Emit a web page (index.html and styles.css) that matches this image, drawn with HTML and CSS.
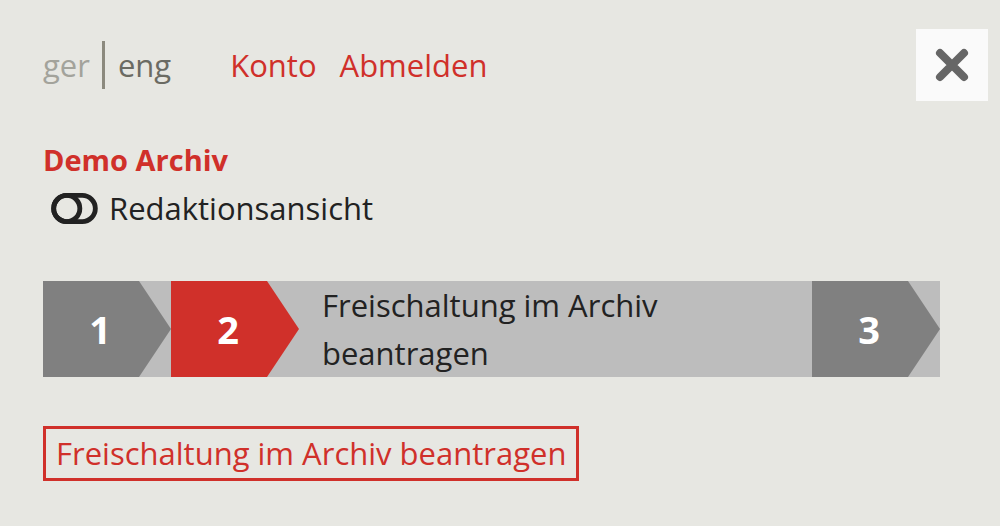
FILE: index.html
```html
<!DOCTYPE html>
<html lang="de">
<head>
  <meta charset="UTF-8" />
  <title>Demo Archiv</title>
  <link rel="stylesheet" href="styles.css">
</head>
<body>
<div class="page">

  <!-- KOPFZEILE -->
  <header class="top">
    <div class="lang">
      <span class="lang-off">ger</span>
      <span class="lang-sep"></span>
      <span class="lang-on">eng</span>
    </div>
    <nav class="account">
      <a href="#">Konto</a>
      <a href="#">Abmelden</a>
    </nav>
    <button class="close" aria-label="Schließen">
      <svg width="34" height="34" viewBox="0 0 34 34">
        <path d="M5 5 L29 29 M29 5 L5 29" stroke="#666" stroke-width="8" stroke-linecap="round" fill="none"/>
      </svg>
    </button>
  </header>

  <!-- ARCHIV -->
  <section class="archive">
    <h2>Demo Archiv</h2>
    <div class="view">
      <svg width="48" height="32" viewBox="0 0 48 32">
        <rect x="2.5" y="2.5" width="43" height="27" rx="13.5" stroke="#222" stroke-width="5" fill="none"/>
        <circle cx="16" cy="16" r="13.5" stroke="#222" stroke-width="5" fill="none"/>
      </svg>
      <span>Redaktionsansicht</span>
    </div>
  </section>

  <!-- SCHRITTE -->
  <ol class="steps">
    <li class="step">1</li>
    <li class="step step-active">2</li>
    <li class="step-text">Freischaltung im Archiv beantragen</li>
    <li class="step step-last">3</li>
  </ol>

  <button class="request">Freischaltung im Archiv beantragen</button>

</div>
</body>
</html>
```

FILE: styles.css
```css
body {
  margin: 0;
  background-color: #e7e7e2;
  font-family: 'Open Sans', sans-serif;
  font-size: 31px;
  line-height: 48px;
  color: #222;
}
.page {
  padding: 29px 60px 0 43px;
}
.top {
  display: flex;
  align-items: center;
  margin-right: -48px;
}
.lang {
  display: flex;
  align-items: center;
}
.lang-off { color: #a3a39b; }
.lang-on { color: #6b6b63; }
.lang-sep {
  width: 3px;
  height: 48px;
  background-color: #8c8a7e;
  margin: 0 13px 0 12px;
}
.account {
  display: flex;
  gap: 23px;
  margin-left: 59px;
}
.account a {
  color: #d0302a;
  text-decoration: none;
}
.close {
  margin-left: auto;
  width: 72px;
  height: 72px;
  border: none;
  background-color: #fafafa;
  display: flex;
  align-items: center;
  justify-content: center;
  padding: 0;
}
.archive {
  margin-top: 35px;
}
h2 {
  margin: 0;
  font-size: 29px;
  font-weight: 700;
  color: #d0302a;
}
.view {
  display: flex;
  align-items: center;
  gap: 11px;
  padding-left: 8px;
}
.view svg {
  width: 47px;
  height: 31px;
}
.steps {
  list-style: none;
  margin: 49px 0 0 0;
  padding: 0;
  display: flex;
  height: 96px;
  background-color: #bdbdbd;
}
.step {
  width: 128px;
  padding-right: 14px;
  box-sizing: border-box;
  display: flex;
  align-items: center;
  justify-content: center;
  background-color: #808080;
  color: #fff;
  font-size: 38px;
  font-weight: 700;
  clip-path: polygon(0 0, 96px 0, 128px 50%, 96px 100%, 0 100%);
}
.step-active { background-color: #d0302a; }
.step-last { margin-left: auto; }
.step-text {
  padding: 0 23px;
  flex: 1;
}
.request {
  margin-top: 49px;
  font-family: 'Open Sans', sans-serif;
  font-size: 31px;
  line-height: 49px;
  color: #d0302a;
  background: none;
  border: 3px solid #d0302a;
  padding: 0 10px;
}
```
